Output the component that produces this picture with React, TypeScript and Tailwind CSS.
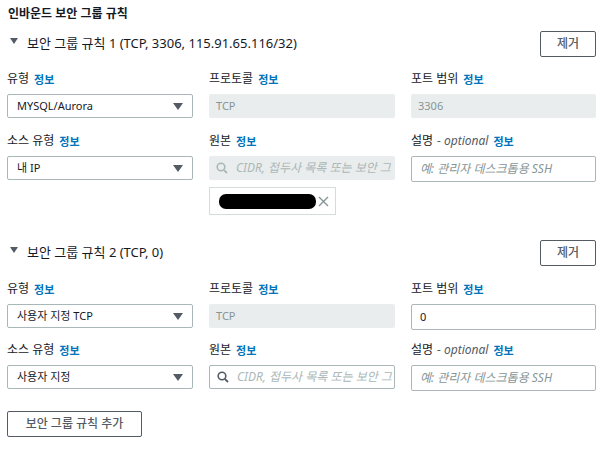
import React from "react";

const font = { fontFamily: '"Noto Sans", "Noto Sans CJK KR", sans-serif' };

function Caret() {
  return (
    <svg width="10" height="7" viewBox="0 0 10 7" className="shrink-0">
      <polygon points="0,0 10,0 5,7" fill="#545b64" />
    </svg>
  );
}

function Info() {
  return <span className="ml-[5px] text-[#0073bb] font-semibold text-[11px]">정보</span>;
}

function Label({ children, optional }: { children: React.ReactNode; optional?: boolean }) {
  return (
    <div className="h-[14px] flex items-center text-[12px] text-[#16191f] leading-none mb-[8px]">
      <span>{children}</span>
      {optional && <span className="ml-[4px] italic text-[#545b64]">- optional</span>}
      <Info />
    </div>
  );
}

function Select({ value }: { value: string }) {
  return (
    <div className="h-[24px] border border-[#aab7b8] rounded-[2px] flex items-center justify-between pl-[9px] pr-[9px] text-[11px] text-[#16191f]">
      <span>{value}</span>
      <Caret />
    </div>
  );
}

function Disabled({ value }: { value: string }) {
  return (
    <div className="h-[24px] bg-[#eaeded] rounded-[2px] flex items-center pl-[7px] text-[11px] text-[#879596]">
      {value}
    </div>
  );
}

function Input({ value, placeholder }: { value?: string; placeholder?: string }) {
  return (
    <div className="h-[26px] border border-[#aab7b8] rounded-[2px] flex items-center pl-[8px] text-[12px]">
      {value ? (
        <span className="text-[#16191f] text-[11px]">{value}</span>
      ) : (
        <span className="italic text-[#879596]">{placeholder}</span>
      )}
    </div>
  );
}

function Search({ disabled }: { disabled?: boolean }) {
  return (
    <div
      className={
        "h-[24px] rounded-[2px] flex items-center pl-[7px] text-[12px] overflow-hidden whitespace-nowrap " +
        (disabled ? "bg-[#eaeded]" : "border border-[#aab7b8]")
      }
    >
      <svg width="12" height="12" viewBox="0 0 12 12" className="shrink-0">
        <circle cx="5" cy="5" r="3.8" fill="none" stroke={disabled ? "#aab7b8" : "#545b64"} strokeWidth="1.6" />
        <line x1="7.8" y1="7.8" x2="11" y2="11" stroke={disabled ? "#aab7b8" : "#545b64"} strokeWidth="1.8" />
      </svg>
      <span className="ml-[8px] italic text-[#aab7b8]">CIDR, 접두사 목록 또는 보안 그</span>
    </div>
  );
}

function RuleHeader({ title }: { title: string }) {
  return (
    <div className="flex items-center justify-between pr-[11px]">
      <div className="flex items-center text-[13px] text-[#16191f]">
        <svg width="8" height="6" viewBox="0 0 8 6" className="ml-[3px] mr-[9px] -mt-[6px]">
          <polygon points="0,0 8,0 4,6" fill="#545b64" />
        </svg>
        <span>{title}</span>
      </div>
      <div className="w-[56px] h-[26px] border border-[#545b64] rounded-[2px] flex items-center justify-center text-[12px] text-[#545b64] font-medium">
        제거
      </div>
    </div>
  );
}

export default function App() {
  return (
    <div className="w-[607px] h-[459px] bg-white pl-[7px] overflow-hidden" style={font}>
      <div className="pt-[6px] pl-[1px] text-[12px] font-semibold text-[#16191f] h-[20px] leading-[16px]">
        인바운드 보안 그룹 규칙
      </div>

      {/* Rule 1 */}
      <div className="mt-[11px]">
        <RuleHeader title="보안 그룹 규칙 1 (TCP, 3306, 115.91.65.116/32)" />
      </div>
      <div className="grid grid-cols-[186px_186px_185px] gap-x-[16px] mt-[15px]">
        <div>
          <Label>유형</Label>
          <Select value="MYSQL/Aurora" />
        </div>
        <div>
          <Label>프로토콜</Label>
          <Disabled value="TCP" />
        </div>
        <div>
          <Label>포트 범위</Label>
          <Disabled value="3306" />
        </div>
      </div>
      <div className="grid grid-cols-[186px_186px_185px] gap-x-[16px] mt-[16px]">
        <div>
          <Label>소스 유형</Label>
          <Select value="내 IP" />
        </div>
        <div>
          <Label>원본</Label>
          <Search disabled />
          <div className="mt-[7px] w-[127px] h-[28px] border border-[#d5dbdb] flex items-center pl-[9px]">
            <div className="w-[97px] h-[15px] bg-black rounded-[7px]" />
            <svg width="11" height="11" viewBox="0 0 11 11" className="ml-[2px]">
              <path d="M1 1L10 10M10 1L1 10" stroke="#879596" strokeWidth="1.4" />
            </svg>
          </div>
        </div>
        <div>
          <Label optional>설명</Label>
          <Input placeholder="예: 관리자 데스크톱용 SSH" />
        </div>
      </div>

      {/* Rule 2 */}
      <div className="mt-[25px]">
        <RuleHeader title="보안 그룹 규칙 2 (TCP, 0)" />
      </div>
      <div className="grid grid-cols-[186px_186px_185px] gap-x-[16px] mt-[16px]">
        <div>
          <Label>유형</Label>
          <Select value="사용자 지정 TCP" />
        </div>
        <div>
          <Label>프로토콜</Label>
          <Disabled value="TCP" />
        </div>
        <div>
          <Label>포트 범위</Label>
          <Input value="0" />
        </div>
      </div>
      <div className="grid grid-cols-[186px_186px_185px] gap-x-[16px] mt-[13px]">
        <div>
          <Label>소스 유형</Label>
          <Select value="사용자 지정" />
        </div>
        <div>
          <Label>원본</Label>
          <Search />
        </div>
        <div>
          <Label optional>설명</Label>
          <Input placeholder="예: 관리자 데스크톱용 SSH" />
        </div>
      </div>

      <div className="mt-[20px] w-[135px] h-[26px] border border-[#545b64] rounded-[2px] flex items-center justify-center text-[12px] text-[#545b64] font-medium">
        보안 그룹 규칙 추가
      </div>
    </div>
  );
}
